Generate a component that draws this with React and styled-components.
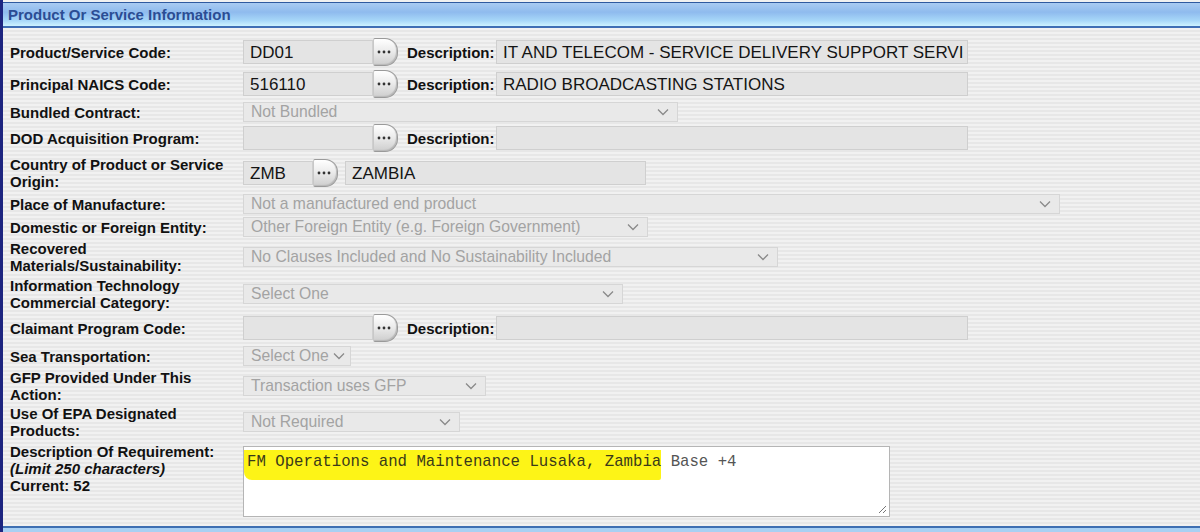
import React from "react";
import styled, { createGlobalStyle } from "styled-components";

const GlobalStyle = createGlobalStyle`
  body {
    margin: 0;
    font-family: "Liberation Sans", Arial, sans-serif;
  }
`;

const Page = styled.div`
  width: 1200px;
  height: 532px;
  box-sizing: border-box;
  position: relative;
  overflow: hidden;
  border-left: 3px solid #1d2580;
  background: repeating-linear-gradient(
    to bottom,
    #f1f1f1 0px,
    #f1f1f1 2px,
    #e7e7e7 2px,
    #e7e7e7 4px
  );
  display: flex;
  flex-direction: column;
`;

const Header = styled.div`
  margin-top: 2px;
  height: 23px;
  border-top: 1px solid #2f5aa0;
  border-bottom: 2px solid #3f6fb5;
  background: linear-gradient(to bottom, #a9cbf2 0%, #8fbbee 40%, #a6d6f8 75%, #cdf3ff 100%);
  display: flex;
  align-items: center;
  padding-left: 5px;
  font-size: 15px;
  font-weight: bold;
  color: #2b4d94;
`;

const Form = styled.div`
  padding-top: 8px;
  display: flex;
  flex-direction: column;
`;

const Row = styled.div`
  display: grid;
  grid-template-columns: 233px 1fr;
  align-items: ${(p) => (p.top ? "start" : "center")};
  height: ${(p) => p.h}px;
  padding-left: 7px;
`;

const Label = styled.div`
  font-size: 15px;
  font-weight: bold;
  line-height: 17px;
  color: #111;
  padding-top: ${(p) => p.pt || 0}px;
  em {
    font-style: italic;
  }
`;

const Field = styled.div`
  display: flex;
  align-items: center;
`;

const TextInput = styled.div`
  width: ${(p) => p.w}px;
  height: 24px;
  box-sizing: border-box;
  background: #e4e4e4;
  border: 1px solid #cfcfcf;
  padding: 0 6px;
  font-size: 17px;
  line-height: 23px;
  color: #141414;
  white-space: nowrap;
  overflow: hidden;
  margin-left: ${(p) => p.ml || 0}px;
`;

const Lookup = styled.div`
  width: 25px;
  height: 28px;
  box-sizing: border-box;
  border: 1px solid #9a9a9a;
  border-left-color: #c8c8c8;
  border-radius: 2px 13px 13px 2px;
  background: linear-gradient(to bottom, #ffffff 0%, #ececec 45%, #cecece 100%);
  box-shadow: inset -1px -1px 1px #b8b8b8;
  display: flex;
  align-items: center;
  justify-content: center;
  padding-right: 3px;
`;

const DescLabel = styled.span`
  font-size: 15px;
  font-weight: bold;
  color: #111;
  margin-left: 9px;
  width: 89px;
  white-space: nowrap;
`;

const Select = styled.div`
  width: ${(p) => p.w}px;
  height: 20px;
  box-sizing: border-box;
  background: #e9e9e9;
  border: 1px solid #d6d6d6;
  padding: 0 8px 0 7px;
  font-size: 15.7px;
  color: #a3a3a3;
  display: flex;
  align-items: center;
  justify-content: ${(p) => (p.tight ? "flex-start" : "space-between")};
  gap: 4px;
  white-space: nowrap;
  svg {
    flex-shrink: 0;
  }
`;

const TextArea = styled.div`
  position: relative;
  width: 647px;
  height: 71px;
  box-sizing: border-box;
  margin-top: 5px;
  background: #fff;
  border: 1px solid #b5b5b5;
  padding: 6px 3px 4px;
  font-family: "Liberation Mono", "DejaVu Sans Mono", monospace;
  font-size: 15.7px;
  color: #555;
  white-space: nowrap;
`;

const Mark = styled.mark`
  background: #fdf417;
  color: #3a3a1a;
  padding: 3px 0 9px 3px;
  margin-left: -3px;
  border-radius: 0 0 2px 8px;
`;

const Grip = styled.svg`
  position: absolute;
  right: 2px;
  bottom: 2px;
`;

const BottomBar = styled.div`
  margin-top: auto;
  height: 4px;
  border-top: 2px solid #3e6fb2;
  background: #a9d0f3;
`;

const Dots = () => (
  <svg width="14" height="4" viewBox="0 0 14 4">
    <circle cx="2" cy="2" r="1.4" fill="#333" />
    <circle cx="7" cy="2" r="1.4" fill="#333" />
    <circle cx="12" cy="2" r="1.4" fill="#333" />
  </svg>
);

const Chevron = () => (
  <svg width="12" height="8" viewBox="0 0 12 8">
    <path d="M1 1.5 L6 6.5 L11 1.5" fill="none" stroke="#8a8a8a" strokeWidth="1.3" />
  </svg>
);

const CodeField = ({ code, desc, codeWidth = 130 }) => (
  <Field>
    <TextInput w={codeWidth}>{code}</TextInput>
    <Lookup>
      <Dots />
    </Lookup>
    <DescLabel>Description:</DescLabel>
    <TextInput w={472}>{desc}</TextInput>
  </Field>
);

const DropDown = ({ w, value, tight }) => (
  <Field>
    <Select w={w} tight={tight}>
      <span>{value}</span>
      <Chevron />
    </Select>
  </Field>
);

export default function App() {
  return (
    <>
      <GlobalStyle />
      <Page>
        <Header>Product Or Service Information</Header>
        <Form>
          <Row h={32}>
            <Label>Product/Service Code:</Label>
            <CodeField code="DD01" desc="IT AND TELECOM - SERVICE DELIVERY SUPPORT SERVI" />
          </Row>
          <Row h={32}>
            <Label>Principal NAICS Code:</Label>
            <CodeField code="516110" desc="RADIO BROADCASTING STATIONS" />
          </Row>
          <Row h={24}>
            <Label>Bundled Contract:</Label>
            <DropDown w={435} value="Not Bundled" />
          </Row>
          <Row h={28}>
            <Label>DOD Acquisition Program:</Label>
            <CodeField code="" desc="" />
          </Row>
          <Row h={41}>
            <Label>
              Country of Product or Service
              <br />
              Origin:
            </Label>
            <Field>
              <TextInput w={70}>ZMB</TextInput>
              <Lookup>
                <Dots />
              </Lookup>
              <TextInput w={301} ml={7}>
                ZAMBIA
              </TextInput>
            </Field>
          </Row>
          <Row h={22}>
            <Label>Place of Manufacture:</Label>
            <DropDown w={817} value="Not a manufactured end product" />
          </Row>
          <Row h={24}>
            <Label>Domestic or Foreign Entity:</Label>
            <DropDown w={405} value="Other Foreign Entity (e.g. Foreign Government)" />
          </Row>
          <Row h={36}>
            <Label>
              Recovered
              <br />
              Materials/Sustainability:
            </Label>
            <DropDown w={535} value="No Clauses Included and No Sustainability Included" />
          </Row>
          <Row h={38}>
            <Label>
              Information Technology
              <br />
              Commercial Category:
            </Label>
            <DropDown w={380} value="Select One" />
          </Row>
          <Row h={30}>
            <Label>Claimant Program Code:</Label>
            <CodeField code="" desc="" />
          </Row>
          <Row h={26}>
            <Label>Sea Transportation:</Label>
            <DropDown w={108} value="Select One" tight />
          </Row>
          <Row h={34}>
            <Label>
              GFP Provided Under This
              <br />
              Action:
            </Label>
            <DropDown w={243} value="Transaction uses GFP" />
          </Row>
          <Row h={38}>
            <Label>
              Use Of EPA Designated
              <br />
              Products:
            </Label>
            <DropDown w={217} value="Not Required" />
          </Row>
          <Row h={80} top>
            <Label pt={2}>
              Description Of Requirement:
              <br />
              <em>(Limit 250 characters)</em>
              <br />
              Current: 52
            </Label>
            <TextArea>
              <Mark>FM Operations and Maintenance Lusaka, Zambia</Mark> Base +4
              <Grip width="10" height="10" viewBox="0 0 10 10">
                <path d="M9 2 L2 9 M9 6 L6 9" stroke="#777" strokeWidth="1" />
              </Grip>
            </TextArea>
          </Row>
        </Form>
        <BottomBar />
      </Page>
    </>
  );
}
